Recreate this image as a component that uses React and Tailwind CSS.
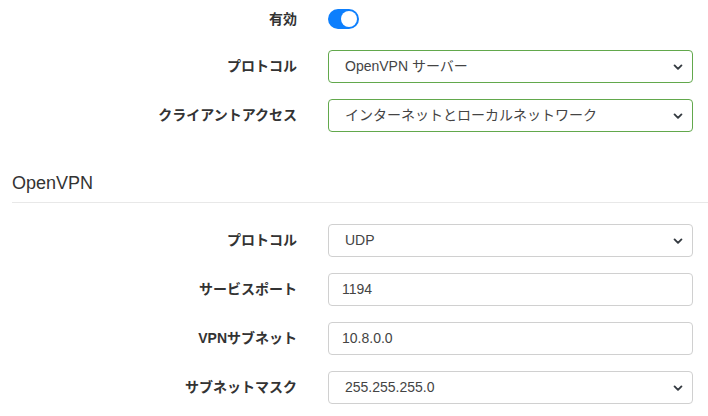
import React from 'react';

const font = { fontFamily: '"Liberation Sans", "Noto Sans CJK JP", sans-serif' };

const Chevron = () => (
  <svg width="10" height="10" viewBox="0 0 16 16" className="absolute right-[9px] top-1/2 -translate-y-1/2 pointer-events-none">
    <path d="M2.5 5.5l5.5 5.5 5.5-5.5" fill="none" stroke="#343a40" strokeWidth="3" strokeLinecap="round" strokeLinejoin="round" />
  </svg>
);

const Row = ({ label, children, tall }) => (
  <div className={`grid grid-cols-[285px_365px] gap-x-[31px] items-center ${tall ? 'h-[30px]' : 'h-[33px]'}`}>
    <div className="text-right text-[14px] font-bold text-[#333]">{label}</div>
    <div>{children}</div>
  </div>
);

const Select = ({ value, green }) => (
  <div
    className={`relative h-[33px] rounded-[4px] border bg-white flex items-center pl-[16px] text-[14px] text-[#444] ${
      green ? 'border-[#62a84c]' : 'border-[#d0d0d0]'
    }`}
  >
    {value}
    <Chevron />
  </div>
);

const Input = ({ value }) => (
  <div className="h-[33px] rounded-[4px] border border-[#d0d0d0] bg-white flex items-center pl-[13px] text-[14px] text-[#444]">
    {value}
  </div>
);

const App = () => {
  return (
    <div className="w-[708px] h-[416px] bg-white px-3 pt-[4px] overflow-hidden" style={font}>
      <div className="flex flex-col gap-4">
        <Row label="有効" tall>
          <div className="w-[31px] h-[20px] rounded-full bg-[#0d7ffd] flex items-center justify-end pr-[2px]">
            <div className="w-[16px] h-[16px] rounded-full bg-white" />
          </div>
        </Row>
        <Row label="プロトコル">
          <Select value="OpenVPN サーバー" green />
        </Row>
        <Row label="クライアントアクセス">
          <Select value="インターネットとローカルネットワーク" green />
        </Row>
      </div>

      <div className="mt-[40px] pb-[8px] border-b border-[#e8e8e8] -mr-3">
        <h2 className="text-[18px] text-[#333] leading-[22px]">OpenVPN</h2>
      </div>

      <div className="flex flex-col gap-4 mt-[21px]">
        <Row label="プロトコル">
          <Select value="UDP" />
        </Row>
        <Row label="サービスポート">
          <Input value="1194" />
        </Row>
        <Row label="VPNサブネット">
          <Input value="10.8.0.0" />
        </Row>
        <Row label="サブネットマスク">
          <Select value="255.255.255.0" />
        </Row>
      </div>
    </div>
  );
};

export default App;
